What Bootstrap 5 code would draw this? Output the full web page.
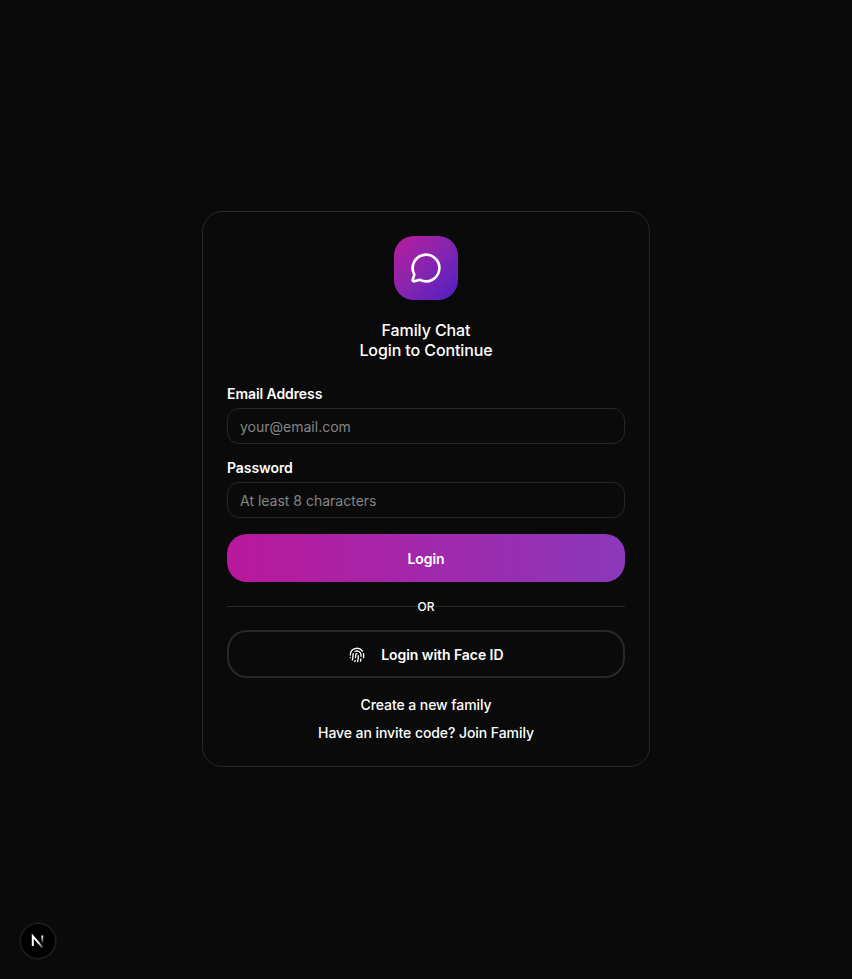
<!DOCTYPE html>
<html lang="en" data-bs-theme="dark">
<head>
<meta charset="utf-8">
<meta name="viewport" content="width=device-width, initial-scale=1">
<title>Family Chat</title>
<link href="https://cdn.jsdelivr.net/npm/bootstrap@5.3.0/dist/css/bootstrap.min.css" rel="stylesheet">
<style>
  body { background: #0a0a0a; color: #fff; font-family: Inter, sans-serif; font-size: 14px; line-height: 20px; -webkit-font-smoothing: antialiased; }
  main { padding-bottom: 1px; }
  .login-card { width: 448px; border: 1px solid #272727; border-radius: 20px; background: #0a0a0a; padding: 24px 24px 23px; box-shadow: 0 1px 3px rgba(0,0,0,.2); }
  .brand-tile { width: 64px; height: 64px; border-radius: 20px; background: linear-gradient(135deg, #b91c9c, #8625b0 50%, #4f1dc4); margin-bottom: 20px; box-shadow: 0 4px 6px rgba(0,0,0,.1); }
  .heading { font-size: 16px; line-height: 20px; font-weight: 500; letter-spacing: -.1px; margin-bottom: 26px; }
  .field { margin-bottom: 16px; }
  .field .form-label { display: block; line-height: 14px; font-weight: 600; letter-spacing: -.08px; padding-top: 1px; margin-bottom: 7px; }
  .field .form-control { height: 36px; padding: 4px 12px; font-size: 14px; border: 1px solid #272727; border-radius: 12px; background: #0a0a0a; }
  .field .form-control::placeholder { color: #858585; opacity: 1; }
  .action { height: 48px; border-radius: 20px; font-size: 14px; line-height: 20px; font-weight: 600; letter-spacing: -.06px; color: #fff; padding: 2px 0 0; }
  .action-main { border: 0; background: linear-gradient(90deg, #b9189c, #8b38ba); }
  .action-alt { border: 2px solid #292929; background: #0a0a0a; gap: 16.6px; }
  .divider { height: 16px; margin: 16px 0; font-size: 12px; line-height: 16px; font-weight: 500; }
  .divider span { padding-top: 2px; }
  .divider::before, .divider::after { content: ""; flex: 1; height: 1px; background: #292929; }
  .links { padding-top: 17px; }
  .links a { color: #fff; font-weight: 500; letter-spacing: -.07px; }
  .dev-badge { left: 20px; bottom: 20.5px; width: 36px; height: 36px; border-radius: 50%; background: #000; box-shadow: inset 0 0 0 1px #242424, 0 0 0 1px #171717; }
</style>
</head>
<body>
<main class="min-vh-100 d-flex align-items-center justify-content-center">
  <form class="login-card">
    <div class="brand-tile d-flex align-items-center justify-content-center mx-auto">
      <svg width="32" height="32" viewBox="0 0 24 24" fill="none" stroke="#fff" stroke-width="2" stroke-linecap="round" stroke-linejoin="round"><path d="M2.992 16.342a2 2 0 0 1 .094 1.167l-1.065 3.29a1 1 0 0 0 1.236 1.168l3.413-.998a2 2 0 0 1 1.099.092 10 10 0 1 0-4.777-4.719"/></svg>
    </div>
    <h1 class="heading text-center">Family Chat<br>Login to Continue</h1>
    <div class="field">
      <label class="form-label" for="email">Email Address</label>
      <input class="form-control" type="email" id="email" placeholder="your@email.com">
    </div>
    <div class="field">
      <label class="form-label" for="password">Password</label>
      <input class="form-control" type="password" id="password" placeholder="At least 8 characters">
    </div>
    <button type="button" class="btn action action-main w-100 d-block">Login</button>
    <div class="divider d-flex align-items-center"><span>OR</span></div>
    <button type="button" class="btn action action-alt w-100 d-flex align-items-center justify-content-center">
      <svg width="16" height="16" viewBox="0 0 24 24" fill="none" stroke="currentColor" stroke-width="2" stroke-linecap="round" stroke-linejoin="round"><path d="M12 10a2 2 0 0 0-2 2c0 1.02-.1 2.51-.26 4"/><path d="M14 13.12c0 2.38 0 6.38-1 8.88"/><path d="M17.29 21.02c.12-.6.43-2.3.5-3.02"/><path d="M2 12a10 10 0 0 1 18-6"/><path d="M2 16h.01"/><path d="M21.8 16c.2-2 .131-5.354 0-6"/><path d="M5 19.5C5.5 18 6 15 6 12a6 6 0 0 1 .34-2"/><path d="M8.65 22c.21-.66.45-1.32.57-2"/><path d="M9 6.8a6 6 0 0 1 9 5.2v2"/></svg>
      <span>Login with Face ID</span>
    </button>
    <div class="links d-flex flex-column align-items-center gap-2">
      <a class="text-decoration-none" href="#">Create a new family</a>
      <a class="text-decoration-none" href="#">Have an invite code? Join Family</a>
    </div>
  </form>
</main>
<div class="dev-badge position-fixed d-flex align-items-center justify-content-center">
  <svg width="16" height="16" viewBox="0 0 16 16" fill="none">
    <defs>
      <linearGradient id="diag" x1="9" y1="9" x2="14" y2="15" gradientUnits="userSpaceOnUse"><stop stop-color="#fff"/><stop offset="1" stop-color="#fff" stop-opacity="0.1"/></linearGradient>
      <linearGradient id="stem" x1="12" y1="3" x2="12" y2="11" gradientUnits="userSpaceOnUse"><stop stop-color="#fff"/><stop offset="1" stop-color="#fff" stop-opacity="0"/></linearGradient>
    </defs>
    <path d="M2.8 13V3.2L12.6 14.6" stroke="url(#diag)" stroke-width="2"/>
    <path d="M12.3 2.5v9" stroke="url(#stem)" stroke-width="1.8"/>
  </svg>
</div>
<script src="https://cdn.jsdelivr.net/npm/bootstrap@5.3.0/dist/js/bootstrap.bundle.min.js"></script>
</body>
</html>
